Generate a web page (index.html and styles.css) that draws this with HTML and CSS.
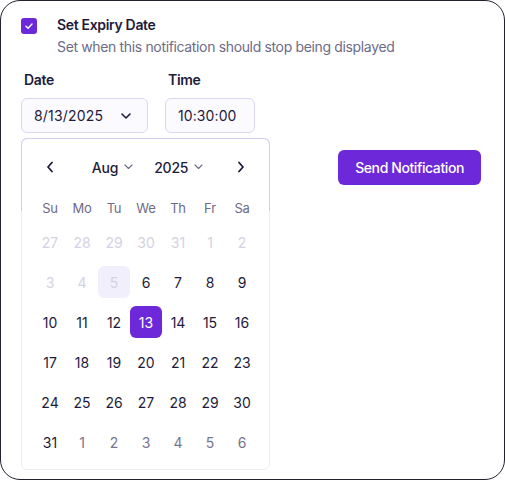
FILE: index.html
```html
<!DOCTYPE html>
<html lang="en">
<head>
<meta charset="utf-8">
<title>Expiry</title>
<link rel="stylesheet" href="styles.css">
</head>
<body>
<div class="frame">
  <div class="check-row">
    <span class="checkbox">
      <svg width="10" height="10" viewBox="0 0 10 10"><path d="M2 5.2 L4.1 7.2 L8 3" fill="none" stroke="#fff" stroke-width="1.4" stroke-linecap="round" stroke-linejoin="round"/></svg>
    </span>
    <div class="check-text">
      <div class="title">Set Expiry Date</div>
      <div class="subtitle">Set when this notification should stop being displayed</div>
    </div>
  </div>

  <div class="fields">
    <div class="field field-date">
      <div class="label">Date</div>
      <div class="input date-input">
        <span>8/13/2025</span>
        <svg width="10" height="6" viewBox="0 0 10 6"><path d="M1 1 L5 5 L9 1" fill="none" stroke="#1e1b3a" stroke-width="1.6" stroke-linecap="round" stroke-linejoin="round"/></svg>
      </div>
      <div class="calendar">
        <div class="cal-head">
          <span class="nav">
            <svg width="8" height="12" viewBox="0 0 8 12"><path d="M6 1.5 L2 6 L6 10.5" fill="none" stroke="#1e1b3a" stroke-width="1.8" stroke-linecap="round" stroke-linejoin="round"/></svg>
          </span>
          <div class="selects">
            <span class="sel">Aug <svg width="9" height="6" viewBox="0 0 9 6"><path d="M1 1 L4.5 4.5 L8 1" fill="none" stroke="#6b6a80" stroke-width="1.1" stroke-linecap="round" stroke-linejoin="round"/></svg></span>
            <span class="sel">2025 <svg width="9" height="6" viewBox="0 0 9 6"><path d="M1 1 L4.5 4.5 L8 1" fill="none" stroke="#6b6a80" stroke-width="1.1" stroke-linecap="round" stroke-linejoin="round"/></svg></span>
          </div>
          <span class="nav">
            <svg width="8" height="12" viewBox="0 0 8 12"><path d="M2 1.5 L6 6 L2 10.5" fill="none" stroke="#1e1b3a" stroke-width="1.8" stroke-linecap="round" stroke-linejoin="round"/></svg>
          </span>
        </div>
        <div class="grid">
          <span class="wd">Su</span><span class="wd">Mo</span><span class="wd">Tu</span><span class="wd">We</span><span class="wd">Th</span><span class="wd">Fr</span><span class="wd">Sa</span>
          <span class="d dis">27</span><span class="d dis">28</span><span class="d dis">29</span><span class="d dis">30</span><span class="d dis">31</span><span class="d dis">1</span><span class="d dis">2</span>
          <span class="d dis">3</span><span class="d dis">4</span><span class="d dis today">5</span><span class="d">6</span><span class="d">7</span><span class="d">8</span><span class="d">9</span>
          <span class="d">10</span><span class="d">11</span><span class="d">12</span><span class="d sel-day">13</span><span class="d">14</span><span class="d">15</span><span class="d">16</span>
          <span class="d">17</span><span class="d">18</span><span class="d">19</span><span class="d">20</span><span class="d">21</span><span class="d">22</span><span class="d">23</span>
          <span class="d">24</span><span class="d">25</span><span class="d">26</span><span class="d">27</span><span class="d">28</span><span class="d">29</span><span class="d">30</span>
          <span class="d">31</span><span class="d out">1</span><span class="d out">2</span><span class="d out">3</span><span class="d out">4</span><span class="d out">5</span><span class="d out">6</span>
        </div>
      </div>
    </div>
    <div class="field">
      <div class="label">Time</div>
      <div class="input time-input">10:30:00</div>
    </div>
  </div>

  <div class="actions">
    <button class="btn">Send Notification</button>
  </div>
</div>
</body>
</html>
```
FILE: styles.css
```css
* { box-sizing: border-box; }
html, body { margin: 0; padding: 0; background: #fff; }
body {
  font-family: "Inter", "Noto Sans", sans-serif;
  font-size: 14px;
  color: #1e1b3a;
}
.frame {
  width: 505px;
  height: 480px;
  border: 1.5px solid #23212f;
  border-radius: 20px;
  padding: 14px 23px 0 20px;
  background: #fff;
  overflow: hidden;
}
.check-row {
  display: flex;
  align-items: flex-start;
  gap: 20px;
}
.checkbox {
  width: 16px;
  height: 16px;
  margin-top: 3px;
  border-radius: 3px;
  background: #6d28d9;
  display: flex;
  align-items: center;
  justify-content: center;
  flex: none;
}
.check-text { display: flex; flex-direction: column; gap: 2px; }
.title { font-weight: 600; line-height: 20px; color: #1e1b3a; letter-spacing: -0.33px; }
.subtitle { line-height: 20px; color: #6e6b87; letter-spacing: -0.35px; }

.fields {
  display: flex;
  gap: 17px;
  margin-top: 13px;
}
.field { position: relative; display: flex; flex-direction: column; }
.label {
  font-weight: 600;
  line-height: 20px;
  margin-left: 3px;
  margin-bottom: 8px;
  letter-spacing: -0.3px;
}
.input {
  height: 35px;
  border: 1px solid #dcd7f0;
  border-radius: 6px;
  background: #fbfaff;
  display: flex;
  align-items: center;
  padding: 0 12px;
}
.date-input { width: 127px; justify-content: space-between; }
.date-input span { letter-spacing: 0.2px; }
.date-input svg { margin-right: 4px; }
.time-input { width: 90px; letter-spacing: 0.1px; }

.calendar {
  position: absolute;
  top: calc(100% + 5px);
  left: 0;
  width: 249px;
  height: 332px;
  background: #fff;
  border: 1px solid #ecebf6;
  border-radius: 6px;
  padding: 14px 12px 0 12px;
  z-index: 2;
}
.calendar::before {
  content: "";
  position: absolute;
  top: -1px;
  left: -1px;
  right: -1px;
  height: 72px;
  border: 1px solid #d3cdf0;
  border-bottom: none;
  border-radius: 6px 6px 0 0;
  pointer-events: none;
}
.cal-head {
  display: flex;
  align-items: center;
  justify-content: space-between;
  height: 28px;
  padding: 0 12px 0 12px;
}
.nav { display: flex; width: 8px; justify-content: center; }
.selects { display: flex; gap: 21px; margin-left: 4px; }
.sel {
  display: flex;
  align-items: center;
  gap: 6px;
  font-weight: 500;
  font-size: 14px;
  letter-spacing: -0.2px;
}
.sel svg { margin-top: -1px; }
.grid {
  display: grid;
  grid-template-columns: repeat(7, 32px);
  grid-template-rows: 20px repeat(6, 32px);
  row-gap: 8px;
  margin-top: 17px;
}
.wd {
  display: flex;
  align-items: center;
  justify-content: center;
  font-size: 13px;
  color: #6e6b87;
  letter-spacing: -0.2px;
}
.d {
  display: flex;
  align-items: center;
  justify-content: center;
  border-radius: 6px;
  color: #1e1b3a;
}
.dis { color: #d4d2e2; }
.out { color: #77758f; }
.today { background: #f1effb; }
.sel-day { background: #6d28d9; color: #fff; }

.actions {
  display: flex;
  justify-content: flex-end;
  margin-top: 17px;
}
.btn {
  font-family: inherit;
  font-size: 14px;
  font-weight: 500;
  letter-spacing: -0.4px;
  color: #fff;
  background: #6d28d9;
  border: none;
  border-radius: 6px;
  height: 35px;
  padding: 0 17px;
  cursor: pointer;
}
```
